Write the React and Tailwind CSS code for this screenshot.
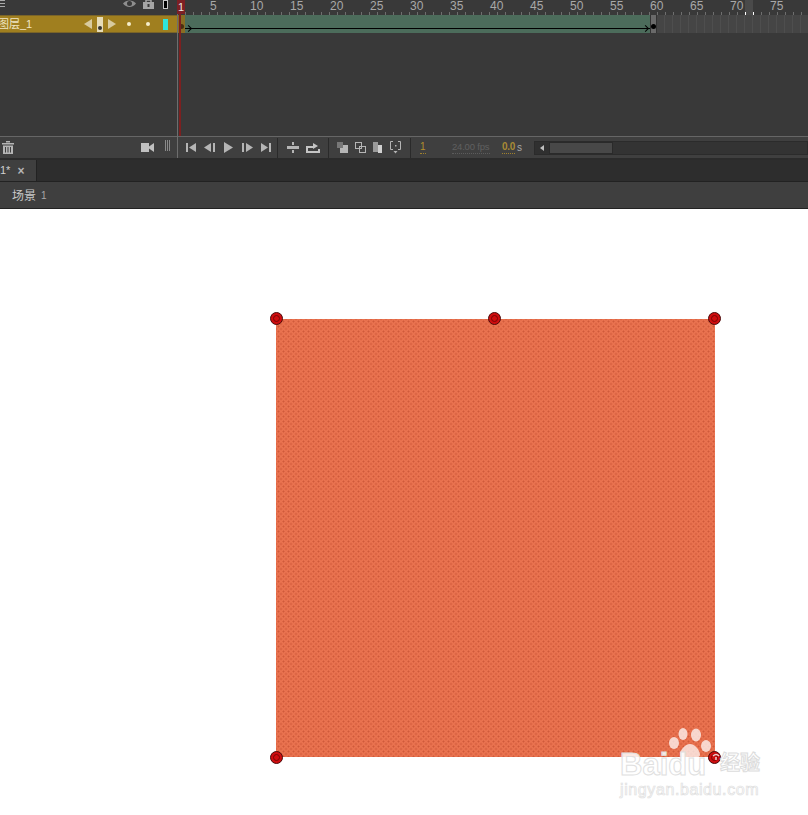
const frames = Array.from({ length: 79 }, (_, i) => i + 1);
const font = { fontFamily: '"Liberation Sans", "Noto Sans CJK SC", sans-serif' };

function Ruler() {
  return (
    <div className="flex h-[15px] flex-1 items-end overflow-hidden">
      {frames.map((n) => (
        <div key={n} className={n === 72 ? 'relative h-full w-2 shrink-0 bg-[#4a4a4a]' : 'relative h-full w-2 shrink-0'}>
          {n % 5 === 0 && (
            <span className="absolute left-[1px] top-0 text-[12px] leading-[13px] text-[#a8a8a8]">{n}</span>
          )}
          <span className={n === 72 || n === 73 ? 'absolute bottom-0 left-0 h-[3px] w-px bg-white' : 'absolute bottom-0 left-0 h-[3px] w-px bg-[#6e6e6e]'} />
        </div>
      ))}
    </div>
  );
}

function Transport() {
  return (
    <div className="flex items-center gap-[7px]">
      <svg width="11" height="9" viewBox="0 0 11 9" fill="#b5b5b5"><rect width="2" height="9" /><path d="M10 0v9L3 4.500z" /></svg>
      <svg width="12" height="9" viewBox="0 0 12 9" fill="#b5b5b5"><path d="M7 0v9L0 4.500z" /><rect x="9" width="2" height="9" /></svg>
      <svg width="11" height="11" viewBox="0 0 11 11" fill="#b5b5b5"><path d="M1 0v11l9-5.500z" /></svg>
      <svg width="12" height="9" viewBox="0 0 12 9" fill="#b5b5b5"><rect x="1" width="2" height="9" /><path d="M5 0v9l7-4.500z" /></svg>
      <svg width="11" height="9" viewBox="0 0 11 9" fill="#b5b5b5"><path d="M1 0v9l7-4.500z" /><rect x="9" width="2" height="9" /></svg>
    </div>
  );
}

function Handle({ className }) {
  return (
    <span className={`absolute flex h-[13px] w-[13px] items-center justify-center rounded-full border border-[#4a0a0a] bg-[#cf0d0f] ${className}`}>
      <span className="h-[7px] w-[7px] rounded-full border border-[#7a0505]" />
    </span>
  );
}

export default function App() {
  return (
    <div className="relative h-[815px] w-[808px] overflow-hidden bg-white" style={font}>
      <div className="relative bg-[#393939]">
        {/* header row */}
        <div className="flex h-[15px]">
          <div className="flex w-[177px] shrink-0 items-start">
            <div className="flex w-[6px] flex-col gap-[2px]">
              <span className="h-px w-[5px] bg-[#aaa]" />
              <span className="h-px w-[5px] bg-[#aaa]" />
              <span className="h-px w-[5px] bg-[#aaa]" />
            </div>
            <svg className="ml-[117px] -mt-[1px]" width="13" height="10" viewBox="0 0 13 10">
              <path d="M0 4.500C3 .5 10 .5 13 4.500 10 9 3 9 0 4.500z" fill="#8e8e8e" />
              <circle cx="6.500" cy="4.500" r="2.500" fill="#393939" />
            </svg>
            <svg className="ml-[7px] -mt-[1px]" width="11" height="10" viewBox="0 0 11 10">
              <rect y="3" width="11" height="7" fill="#a5a5a5" />
              <path d="M3 3V1h5v2" fill="none" stroke="#a5a5a5" strokeWidth="1.500" />
              <rect x="4.500" y="5" width="2" height="3" fill="#393939" />
            </svg>
            <span className="ml-[9px] h-[9px] w-[5px] border border-[#c8c8c8] bg-black" />
          </div>
          <Ruler />
        </div>

        {/* layer row */}
        <div className="flex h-[18px]">
          <div className="flex w-[177px] shrink-0 items-center border-y border-[#7a6428] bg-[#a07f1f]">
            <span className="-ml-[2px] w-[34px] whitespace-nowrap text-[11px] leading-none text-[#f0e6c4]">图层_1</span>
            <div className="ml-[52px] flex items-center gap-[5px]">
              <span className="h-0 w-0 border-y-[5px] border-r-[8px] border-y-transparent border-r-[#d8cba0]" />
              <span className="flex h-[15px] w-[6px] items-end justify-center bg-[#e6dcb8] pb-[2px]">
                <span className="h-1 w-1 rounded-full bg-[#333]" />
              </span>
              <span className="h-0 w-0 border-y-[5px] border-l-[8px] border-y-transparent border-l-[#d8cba0]" />
            </div>
            <span className="ml-[11px] h-1 w-1 rounded-full bg-[#f5eecb]" />
            <span className="ml-[15px] h-1 w-1 rounded-full bg-[#f5eecb]" />
            <span className="ml-[13px] h-[11px] w-[5px] bg-[#2fe6dc]" />
          </div>
          <div className="flex flex-1">
            <div className="flex w-2 shrink-0 items-center justify-center bg-[#8a6d22] pt-[5px]">
              <span className="h-[5px] w-[5px] rounded-full bg-[#4a2f10]" />
            </div>
            <div className="relative w-[465px] shrink-0 bg-[#4c6c5b]">
              <span className="absolute inset-x-0 top-[13px] h-px bg-black" />
              <span className="absolute left-[1px] top-[11px] h-[5px] w-[5px] rotate-45 border-r border-t border-black" />
              <span className="absolute right-[2px] top-[11px] h-[5px] w-[5px] rotate-45 border-r border-t border-black" />
            </div>
            <div className="flex w-[7px] shrink-0 items-center justify-center border-x border-[#333] bg-[#6a6a6a] pt-[5px]">
              <span className="h-[5px] w-[5px] shrink-0 rounded-full bg-black" />
            </div>
            <div className="flex flex-1 overflow-hidden">
              {frames.slice(0, 20).map((n) => (
                <span key={n} className="h-full w-2 shrink-0 border-r border-[#4e4e4e] bg-[#454545]" />
              ))}
            </div>
          </div>
        </div>

        <div className="h-[103px]" />

        {/* toolbar */}
        <div className="flex h-[24px] items-center border-t border-[#666] border-b-2 border-b-[#2b2b2b] bg-[#3f3f3f]">
          <svg className="ml-[2px]" width="12" height="13" viewBox="0 0 12 13" fill="#b5b5b5">
            <rect y="2" width="12" height="1.500" /><rect x="4" width="4" height="1.500" />
            <path d="M1 4.500h10v8.500H1zM3 6v5.500h1V6zm2.500 0v5.500h1V6zM8 6v5.500h1V6z" fillRule="evenodd" />
          </svg>
          <svg className="ml-[127px]" width="13" height="9" viewBox="0 0 13 9" fill="#c0c0c0">
            <rect width="8" height="9" /><path d="M8 3.500 13 0v9L8 5.500z" />
          </svg>
          <div className="ml-[11px] -mt-1 flex h-[11px] w-[5px] justify-between">
            <span className="w-px bg-[#8a8a8a]" /><span className="w-px bg-[#8a8a8a]" /><span className="w-px bg-[#8a8a8a]" />
          </div>
          <span className="ml-[7px] h-full w-px bg-[#6a6a6a]" />
          <div className="ml-[8px]"><Transport /></div>
          <span className="ml-[6px] h-[20px] w-px bg-[#2a2a2a]" />
          <svg className="ml-[9px]" width="12" height="11" viewBox="0 0 12 11" fill="#b5b5b5">
            <rect y="4" width="12" height="3" /><rect x="5" width="2" height="3" /><rect x="5" y="8" width="2" height="3" />
          </svg>
          <svg className="ml-[7px]" width="14" height="11" viewBox="0 0 14 11" fill="#c4c4c4">
            <path d="M0 4h7V1l5 3-5 3V6H2v3h10V7h2v4H0z" />
          </svg>
          <span className="ml-[8px] h-[20px] w-px bg-[#2a2a2a]" />
          <svg className="ml-[8px]" width="11" height="11" viewBox="0 0 11 11">
            <rect x="3" y="3" width="8" height="8" fill="#b5b5b5" /><rect width="6" height="6" fill="#777" />
          </svg>
          <svg className="ml-[7px]" width="11" height="11" viewBox="0 0 11 11" fill="none" stroke="#b5b5b5">
            <rect x=".5" y=".5" width="6" height="6" /><rect x="4.500" y="4.500" width="6" height="6" />
          </svg>
          <svg className="ml-[7px]" width="10" height="11" viewBox="0 0 10 11">
            <rect width="5" height="10" fill="#9a9a9a" /><rect x="5" y="3" width="4" height="8" fill="#d0d0d0" />
          </svg>
          <svg className="ml-[7px]" width="11" height="13" viewBox="0 0 11 13" fill="none" stroke="#b5b5b5">
            <path d="M3 .5H.5v8H3M8 .5h2.500v8H8" /><path d="M3.500 10h4L5.500 12.500z" fill="#b5b5b5" stroke="none" /><rect x="5" y="4" width="1.500" height="1.500" fill="#b5b5b5" stroke="none" />
          </svg>
          <span className="ml-[9px] h-[20px] w-px bg-[#2a2a2a]" />
          <span className="ml-[9px] w-[6px] border-b border-dotted border-[#a0812c] text-[10px] leading-[12px] text-[#b28e2e]">1</span>
          <span className="ml-[26px] w-[38px] whitespace-nowrap border-b border-dotted border-[#5c5c5c] text-[9.5px] leading-[12px] tracking-[-0.2px] text-[#5f5f5f]">24.00 fps</span>
          <span className="ml-[12px] w-[13px] whitespace-nowrap border-b border-dotted border-[#a0812c] text-[10px] font-bold leading-[12px] tracking-[-0.3px] text-[#a88a35]">0.0</span>
          <span className="ml-[2px] w-[5px] text-[10px] leading-[12px] text-[#a8a8a8]">s</span>
          <div className="ml-[12px] flex h-[14px] flex-1 border border-[#2b2b2b] bg-[#333]">
            <span className="flex w-[14px] items-center justify-center bg-[#303030]">
              <span className="h-0 w-0 border-y-[3px] border-r-[4px] border-y-transparent border-r-[#c0c0c0]" />
            </span>
            <span className="w-[64px] border border-[#2a2a2a] bg-[#484848]" />
          </div>
        </div>

        {/* tabs */}
        <div className="flex h-[22px] border-b border-[#222] bg-[#2d2d2d]">
          <div className="flex w-[37px] items-center border-r border-[#222] bg-[#3f3f3f]">
            <span className="text-[11px] leading-none text-[#d0d0d0]">1*</span>
            <span className="ml-[7px] text-[12px] font-bold leading-none text-[#b5b5b5]">×</span>
          </div>
        </div>

        {/* breadcrumb */}
        <div className="flex h-[27px] items-center border-b border-[#222] bg-[#3f3f3f] pl-3 pt-[2px]">
          <span className="text-[12px] leading-none text-[#c8c8c8]">场景</span>
          <span className="ml-[5px] text-[10px] leading-none text-[#a8a8a8]">1</span>
        </div>

        {/* playhead */}
        <span className="absolute left-[177px] top-0 h-[158px] w-px bg-[#6e6e6e]" />
        <span className="absolute left-[179px] top-0 h-[136px] w-[2px] bg-[#7c2020]" />
        <span className="absolute left-[177px] top-0 flex h-[14px] w-[8px] justify-center bg-[#7d1f24] text-[11px] leading-[14px] text-[#e8e8e8]">1</span>
      </div>

      {/* stage */}
      <div className="pl-[276px] pt-[110px]">
        <div className="relative h-[438px] w-[439px] bg-[#ea7350] bg-[radial-gradient(#cf5a3a_0.8px,transparent_1.2px),radial-gradient(#cf5a3a_0.8px,transparent_1.2px)] bg-[length:5px_5px] bg-[position:0_0,2.5px_2.5px]">
          <Handle className="-left-[6px] -top-[7px]" />
          <Handle className="left-[212px] -top-[7px]" />
          <Handle className="-right-[6px] -top-[7px]" />
          <Handle className="-left-[6px] -bottom-[7px]" />
          <Handle className="-right-[6px] -bottom-[7px]" />
        </div>
      </div>

      {/* watermark */}
      <div className="absolute left-[620px] top-[728px] h-[70px] w-[145px]">
        <svg className="absolute left-[48px] top-0" width="44" height="32" viewBox="0 0 44 32" fill="#ffffff" fillOpacity="0.72">
          <ellipse cx="6" cy="15" rx="5" ry="6" />
          <ellipse cx="15" cy="6" rx="4.500" ry="6" />
          <ellipse cx="28" cy="7" rx="5" ry="6.500" />
          <ellipse cx="38" cy="18" rx="5" ry="6" />
          <path d="M22 16c5 0 10 6 10 11-1 4-6 3-10 2-4 1-9 2-10-2 0-5 5-11 10-11z" />
        </svg>
        <svg className="absolute left-[91px] top-[24px]" width="10" height="10" viewBox="0 0 10 10" fill="none" stroke="#ffffff" strokeOpacity="0.8" strokeWidth="1.500">
          <path d="M2 4c2-2 4-2 6 0M5 5v3" />
        </svg>
        <span className="absolute left-0 top-[21px] text-[31px] font-bold leading-none text-white/85 [-webkit-text-stroke:1px_#e0e0e0]">Baidu</span>
        <span className="absolute left-[100px] top-[25px] text-[20px] font-bold leading-none text-white/85 [-webkit-text-stroke:1px_#dcdcdc]">经验</span>
        <span className="absolute left-0 top-[54px] text-[16px] leading-none tracking-[0.6px] text-white/85 [-webkit-text-stroke:0.7px_#dedede]">jingyan.baidu.com</span>
      </div>
    </div>
  );
}
